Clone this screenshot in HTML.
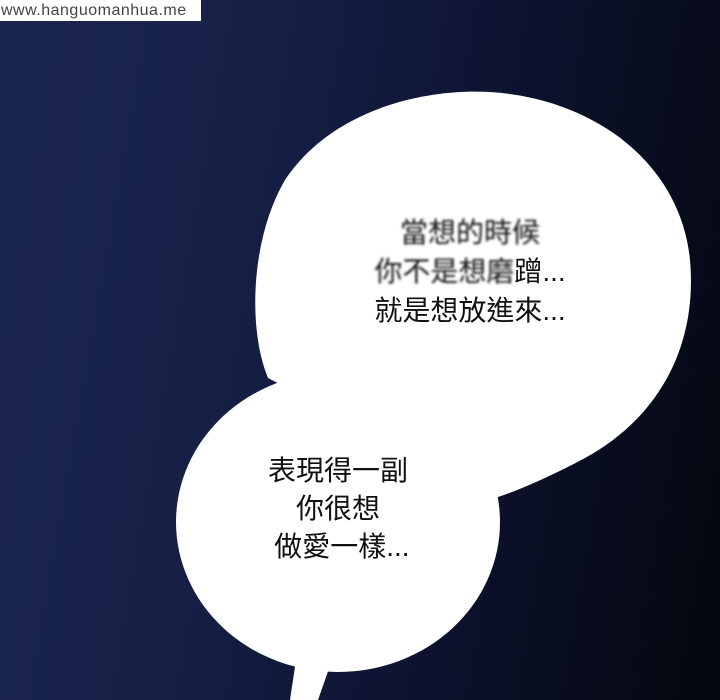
<!DOCTYPE html>
<html><head><meta charset="utf-8"><style>
html,body{margin:0;padding:0;width:720px;height:700px;overflow:hidden}
body{position:relative;background:linear-gradient(100deg,#1b2650 0%,#172148 30%,#0f1636 55%,#090d20 80%,#04060d 100%)}
svg{position:absolute;left:0;top:0}
.t{position:absolute;font-family:"Liberation Sans","Noto Sans CJK TC",sans-serif;color:#111;text-align:center;white-space:nowrap}
.wm{position:absolute;left:0;top:0;width:200px;height:21px;background:#fff;font-family:"Liberation Sans",sans-serif;font-size:16px;color:#444;line-height:21px;padding-left:1px;letter-spacing:0.5px}
.blur{filter:blur(1.2px)}
</style></head><body>
<svg width="720" height="700" viewBox="0 0 720 700">
<path fill="#fff" d="M268,378 C248,330 250,240 285,180 C330,112 420,88 490,92 C590,98 680,160 690,260 C698,350 655,420 585,458 C555,474 525,488 498,497 Z"/>
<ellipse fill="#fff" cx="338" cy="522" rx="162" ry="150"/>
<path fill="#fff" d="M296,660 L290,700 L318,700 L332,660 Z"/>
</svg>
<div class="wm">www.hanguomanhua.me</div>
<div class="t" style="left:370px;top:217px;width:200px;font-size:28px;line-height:32px"><span class="blur">當想的時候</span></div>
<div class="t" style="left:370px;top:256px;width:200px;font-size:28px;line-height:32px"><span class="blur">你不是想磨</span>蹭...</div>
<div class="t" style="left:370px;top:295px;width:200px;font-size:28px;line-height:32px">就是想放進來...</div>
<div class="t" style="left:238px;top:455px;width:200px;font-size:28px;line-height:32px">表現得一副</div>
<div class="t" style="left:238px;top:493px;width:200px;font-size:28px;line-height:32px">你很想</div>
<div class="t" style="left:238px;top:531px;width:200px;font-size:28px;line-height:32px">&nbsp;做愛一樣...</div>
</body></html>
